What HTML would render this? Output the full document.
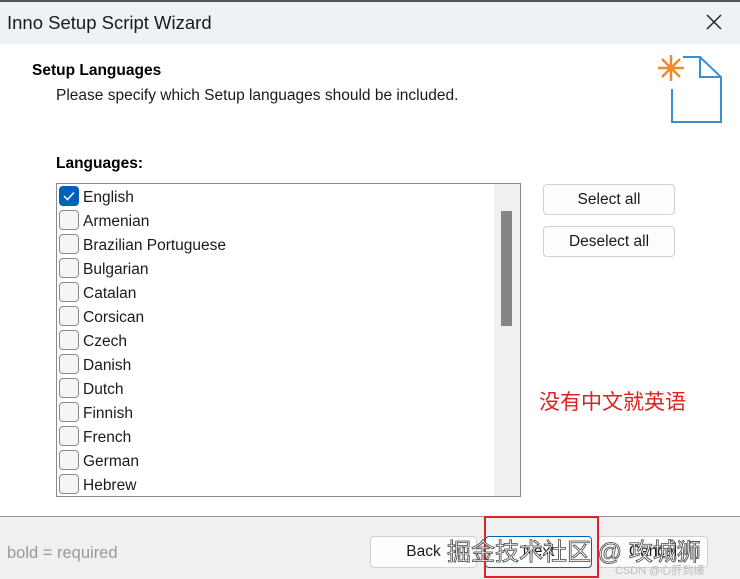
<!DOCTYPE html>
<html><head><meta charset="utf-8"><style>
*{margin:0;padding:0;box-sizing:border-box}
body{width:740px;height:579px;overflow:hidden;background:#fff;font-family:"Liberation Sans","Noto Sans CJK SC",sans-serif;position:relative;color:#000}
.abs{position:absolute}
.title{left:0;top:0;width:740px;height:44px;background:#eef2f7;border-top:2px solid #555}
.btn{position:absolute;background:#fdfdfd;border:1px solid #d0d0d0;border-radius:4px;font-size:15.5px;text-align:center;color:#1a1a1a}
.item{position:absolute;left:59px;height:24px;font-size:15.5px;line-height:24px;color:#1a1a1a}
.cb{display:inline-block;width:20px;height:20px;border:1px solid #888;border-radius:4px;background:#f5f5f5;vertical-align:middle;margin-right:4px;position:relative;top:-2px}
.cb.on{background:#005fb8;border-color:#005fb8}
</style></head><body>
<div class="abs title"></div>
<div class="abs" style="left:7px;top:12px;font-size:18.5px;color:#1a1a1a">Inno Setup Script Wizard</div>
<svg class="abs" style="left:706px;top:14px" width="16" height="16" viewBox="0 0 16 16"><path d="M1 1L15 15M15 1L1 15" stroke="#222" stroke-width="1.5"/></svg>
<div class="abs" style="left:32px;top:62px;font-size:15.5px;font-weight:bold">Setup Languages</div>
<div class="abs" style="left:56px;top:87px;font-size:15.5px;color:#1a1a1a">Please specify which Setup languages should be included.</div>
<svg class="abs" style="left:655px;top:50px" width="70" height="76" viewBox="0 0 70 76">
<path d="M28 7H45L66 27V72H17V39" fill="none" stroke="#3a8fd0" stroke-width="2"/>
<path d="M45 7V27H66" fill="none" stroke="#3a8fd0" stroke-width="2"/>
<g stroke="#ee8a2a" stroke-width="2.5"><path d="M16 5V31M3 18H29M7 9L25 27M25 9L7 27"/></g>
</svg>
<div class="abs" style="left:56px;top:155px;font-size:15.5px;font-weight:bold">Languages:</div>
<div class="abs" style="left:56px;top:183px;width:465px;height:314px;border:1px solid #8a8a8a;background:#fff;overflow:hidden">
<div class="abs" style="left:437px;top:0;width:26px;height:312px;background:#f0f0f0"></div>
<div class="abs" style="left:444px;top:27px;width:11px;height:115px;background:#858585"></div>
</div>
<div class="item" style="top:186px"><span class="cb on"><svg width="18" height="18" viewBox="0 0 18 18" style="position:absolute;left:0;top:0"><path d="M4 9L7.5 12.5L14 5.5" fill="none" stroke="#fff" stroke-width="1.5"/></svg></span>English</div>
<div class="item" style="top:210px"><span class="cb"></span>Armenian</div>
<div class="item" style="top:234px"><span class="cb"></span>Brazilian Portuguese</div>
<div class="item" style="top:258px"><span class="cb"></span>Bulgarian</div>
<div class="item" style="top:282px"><span class="cb"></span>Catalan</div>
<div class="item" style="top:306px"><span class="cb"></span>Corsican</div>
<div class="item" style="top:330px"><span class="cb"></span>Czech</div>
<div class="item" style="top:354px"><span class="cb"></span>Danish</div>
<div class="item" style="top:378px"><span class="cb"></span>Dutch</div>
<div class="item" style="top:402px"><span class="cb"></span>Finnish</div>
<div class="item" style="top:426px"><span class="cb"></span>French</div>
<div class="item" style="top:450px"><span class="cb"></span>German</div>
<div class="item" style="top:474px"><span class="cb"></span>Hebrew</div>
<div class="btn" style="left:543px;top:184px;width:132px;height:31px;line-height:29px">Select all</div>
<div class="btn" style="left:543px;top:226px;width:132px;height:31px;line-height:29px">Deselect all</div>
<div class="abs" style="left:539px;top:386px;font-size:21px;color:#e02020">没有中文就英语</div>
<div class="abs" style="left:0;top:516px;width:740px;height:63px;background:#f0f0f0;border-top:1px solid #999"></div>
<div class="abs" style="left:7px;top:544px;font-size:16.5px;color:#999">bold = required</div>
<div class="btn" style="left:370px;top:536px;width:107px;height:32px;line-height:30px">Back</div>
<div class="btn" style="left:485px;top:536px;width:107px;height:32px;line-height:30px;border-color:#005fb8">Next</div>
<div class="btn" style="left:598px;top:536px;width:110px;height:32px;line-height:30px">Cancel</div>
<div class="abs" style="left:484px;top:516px;width:115px;height:62px;border:2px solid #e0202a"></div>
<div class="abs" style="left:447px;top:532px;font-size:24px;color:#fff;-webkit-text-stroke:0.8px #444">掘金技术社区 @ 攻城狮</div>
<div class="abs" style="left:615px;top:562px;font-size:11px;color:#bbb">CSDN @心肝到爆</div>
</body></html>
